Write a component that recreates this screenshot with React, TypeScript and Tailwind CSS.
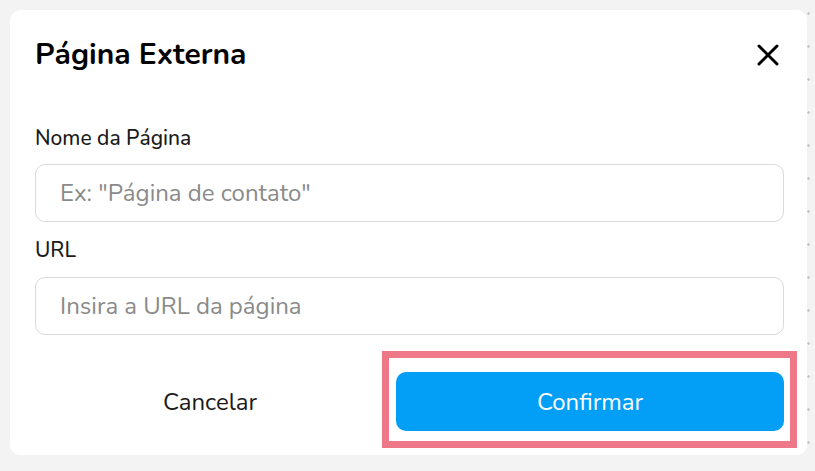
import { X } from 'lucide-react';

const font = { fontFamily: '"Nunito", "Lato", "Noto Sans", sans-serif' };

const dotBg = {
  backgroundImage: 'radial-gradient(circle, #c8c8c8 1px, transparent 1.5px)',
  backgroundSize: '33px 33px',
  backgroundPosition: '0px -3px',
};

const Field = ({ label, placeholder, gap }: { label: string; placeholder: string; gap: string }) => (
  <div className="flex flex-col">
    <label className="text-[21px] font-medium text-[#1a1a1a] leading-[26px]">{label}</label>
    <input
      className={`${gap} h-[58px] w-full rounded-[10px] border border-[#d9d9de] px-6 text-[24px] text-[#333] placeholder:text-[#8a8a8a] outline-none`}
      placeholder={placeholder}
      style={font}
    />
  </div>
);

export default function App() {
  return (
    <div className="w-[815px] h-[471px] bg-[#f3f3f3] p-[10px] pr-[8px] pb-[16px]" style={{ ...dotBg, ...font }}>
      <div className="relative h-full w-full rounded-[10px] bg-white pl-[25px] pr-[23px] pt-[27px]">
        <div className="flex h-[36px] items-center justify-between">
          <h1 className="text-[30px] font-bold text-black leading-9">Página Externa</h1>
          <button className="-mr-[2px] text-black">
            <X size={36} strokeWidth={2} />
          </button>
        </div>

        <div className="mt-[52px] flex flex-col gap-[15px]">
          <Field label="Nome da Página" placeholder='Ex: "Página de contato"' gap="mt-[13px]" />
          <Field label="URL" placeholder="Insira a URL da página" gap="mt-[14px]" />
        </div>

        <div className="mt-[37px] flex items-center gap-[11px]">
          <button className="h-[59px] w-[350px] text-[24px] text-[#1a1a1a]">Cancelar</button>
          <button className="h-[59px] flex-1 rounded-[10px] bg-[#039ef5] text-[24px] text-white">
            Confirmar
          </button>
        </div>

        <div className="pointer-events-none absolute left-[372px] top-[341px] h-[97px] w-[415px] border-[7px] border-[#ee7788]" />
      </div>
    </div>
  );
}
